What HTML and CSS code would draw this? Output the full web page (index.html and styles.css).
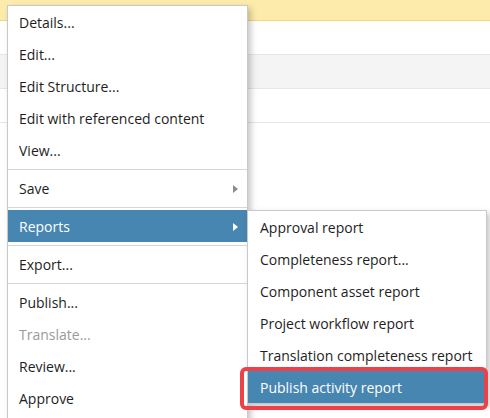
FILE: index.html
```html
<!DOCTYPE html>
<html>
<head>
<meta charset="utf-8">
<link rel="stylesheet" href="styles.css">
</head>
<body>
<div class="page">
  <div class="notice"></div>
  <div class="row"></div>
  <div class="row row-alt"></div>
  <div class="row"></div>
</div>

<ul class="menu main-menu">
  <li class="item">Details...</li>
  <li class="item">Edit...</li>
  <li class="item">Edit Structure...</li>
  <li class="item">Edit with referenced content</li>
  <li class="item">View...</li>
  <li class="sep"></li>
  <li class="item has-sub">Save<span class="arrow"></span></li>
  <li class="sep"></li>
  <li class="item has-sub active">Reports<span class="arrow"></span></li>
  <li class="sep"></li>
  <li class="item">Export...</li>
  <li class="sep"></li>
  <li class="item">Publish...</li>
  <li class="item disabled">Translate...</li>
  <li class="item">Review...</li>
  <li class="item">Approve</li>
</ul>

<ul class="menu sub-menu">
  <li class="item">Approval report</li>
  <li class="item">Completeness report...</li>
  <li class="item">Component asset report</li>
  <li class="item">Project workflow report</li>
  <li class="item">Translation completeness report</li>
  <li class="item active">Publish activity report</li>
</ul>

<div class="callout"></div>
</body>
</html>
```

FILE: styles.css
```css
html, body {
  margin: 0;
  padding: 0;
}
body {
  width: 490px;
  height: 418px;
  overflow: hidden;
  background: #ffffff;
  font-family: "Open Sans", "Noto Sans", sans-serif;
  font-size: 14px;
  color: #1e1e1e;
  position: relative;
}
.page {
  display: flex;
  flex-direction: column;
}
.notice {
  height: 20px;
  background: #fcebaa;
  border-bottom: 1px solid #f3d777;
}
.row {
  height: 33px;
  border-bottom: 1px solid #e6e6e6;
}
.row-alt {
  background: #f4f4f4;
}
.menu {
  list-style: none;
  margin: 0;
  padding: 0;
  position: absolute;
  background: #ffffff;
  border: 1px solid #c9c9c9;
  box-shadow: 3px 3px 6px rgba(0, 0, 0, 0.22);
}
.main-menu {
  left: 7px;
  top: 5px;
  width: 239px;
  height: 420px;
}
.sub-menu {
  left: 247px;
  top: 210px;
  width: 238px;
}
.item {
  height: 32px;
  line-height: 34px;
  overflow: hidden;
  padding-left: 11px;
  position: relative;
  white-space: nowrap;
}
.sub-menu .item {
  padding-left: 12px;
}
.item.active {
  background: #4786b1;
  color: #ffffff;
}
.item.disabled {
  color: #9a9a9a;
}
.sep {
  height: 1px;
  background: #d6d6d6;
  margin: 2.5px 0;
}
.arrow {
  position: absolute;
  right: 9px;
  top: 13px;
  width: 0;
  height: 0;
  border-top: 4px solid transparent;
  border-bottom: 4px solid transparent;
  border-left: 5px solid #8c8c8c;
}
.active .arrow {
  border-left-color: #ffffff;
}
.callout {
  position: absolute;
  left: 240px;
  top: 367px;
  width: 240px;
  height: 35px;
  border: 4px solid #ec4148;
  border-radius: 6px;
}
```
